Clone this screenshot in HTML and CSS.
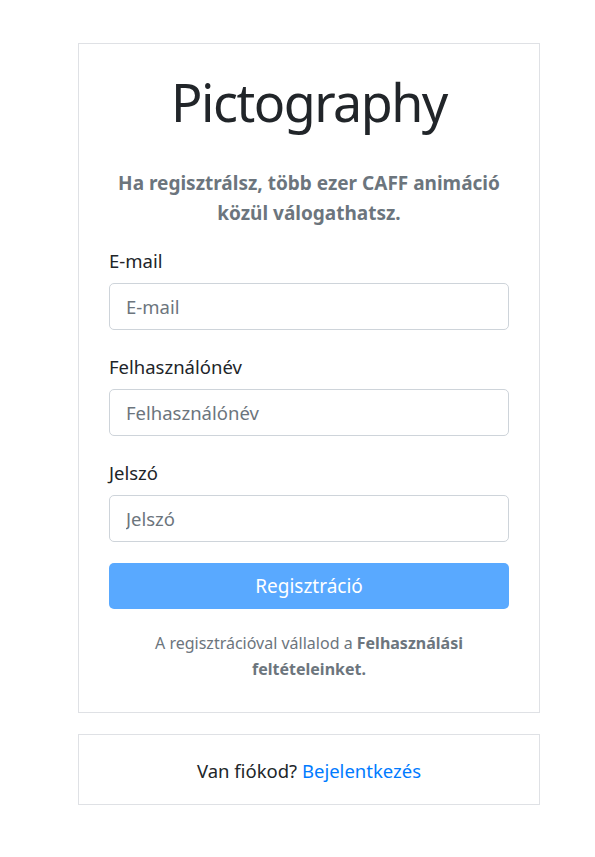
FILE: index.html
```html
<!DOCTYPE html>
<html lang="hu">
<head>
<meta charset="utf-8">
<title>Pictography</title>
<link rel="stylesheet" href="styles.css">
</head>
<body>
<main class="page">
  <section class="card">
    <h1 class="title">Pictography</h1>
    <p class="subtitle">Ha regisztrálsz, több ezer CAFF animáció közül válogathatsz.</p>
    <form class="form">
      <div class="group">
        <label class="label" for="email">E-mail</label>
        <input class="input" id="email" type="text" placeholder="E-mail">
      </div>
      <div class="group">
        <label class="label" for="user">Felhasználónév</label>
        <input class="input" id="user" type="text" placeholder="Felhasználónév">
      </div>
      <div class="group">
        <label class="label" for="pass">Jelszó</label>
        <input class="input" id="pass" type="password" placeholder="Jelszó">
      </div>
      <button class="btn" type="button" disabled>Regisztráció</button>
    </form>
    <p class="terms">A regisztrációval vállalod a <b>Felhasználási</b> <b>feltételeinket.</b></p>
  </section>
  <section class="card card-small">
    <p class="login">Van fiókod? <a class="link" href="#">Bejelentkezés</a></p>
  </section>
</main>
</body>
</html>
```
FILE: styles.css
```css
* { box-sizing: border-box; }
html, body { margin: 0; padding: 0; background: #fff; }
body {
  font-family: "Noto Sans", "Open Sans", sans-serif;
  color: #212529;
  font-size: 16px;
}
.page {
  width: 462px;
  margin: 43px 0 0 78px;
  display: flex;
  flex-direction: column;
  gap: 21px;
}
.card {
  border: 1px solid #dfe1e5;
  background: #fff;
  padding: 27px 30px 30px;
  display: flex;
  flex-direction: column;
}
.title {
  margin: 0;
  text-align: center;
  font-size: 52px;
  font-weight: 400;
  letter-spacing: -1.5px;
  line-height: 62px;
  color: #212529;
}
.subtitle {
  margin: 35px 0 0;
  text-align: center;
  font-weight: 700;
  font-size: 19px;
  line-height: 30px;
  color: #6c757d;
}
.form {
  margin-top: 19px;
  display: flex;
  flex-direction: column;
}
.group {
  display: flex;
  flex-direction: column;
  margin-bottom: 23px;
}
.group:last-of-type { margin-bottom: 21px; }
.label {
  font-size: 18.5px;
  line-height: 28px;
  margin-bottom: 8px;
}
.input {
  height: 47px;
  border: 1px solid #ced4da;
  border-radius: 5px;
  padding: 0 16px;
  font-family: inherit;
  font-size: 18.5px;
  color: #495057;
}
.input::placeholder { color: #6c757d; opacity: 1; }
.btn {
  height: 46px;
  border: none;
  border-radius: 5px;
  background: #59a9ff;
  color: #fff;
  font-family: inherit;
  font-size: 19px;
}
.terms {
  margin: 21px 0 0;
  text-align: center;
  font-size: 16px;
  line-height: 26px;
  color: #6c757d;
}
.terms b { font-weight: 700; }
.card-small {
  padding: 22px 30px 19px;
  align-items: center;
}
.login {
  margin: 0;
  font-size: 18.5px;
  line-height: 28px;
}
.link { color: #007bff; text-decoration: none; }
```
